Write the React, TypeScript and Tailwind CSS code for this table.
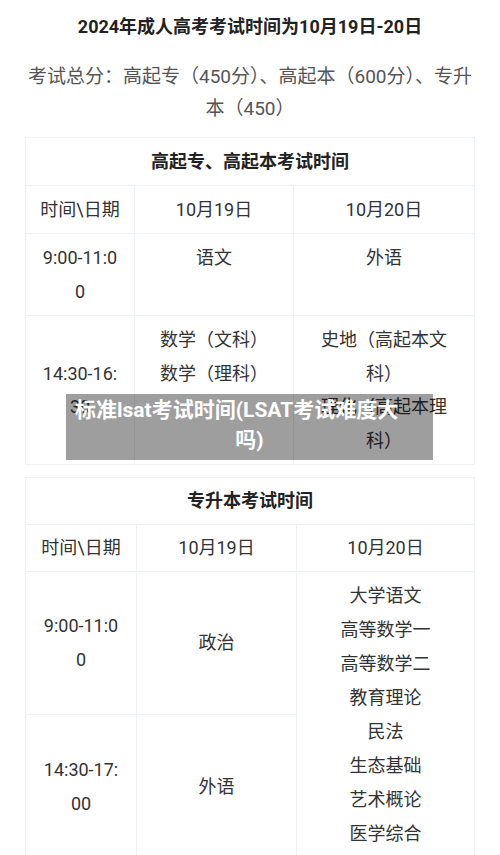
import { ReactElement, ReactNode } from "react";

const font = { fontFamily: 'Roboto, "Noto Sans CJK SC", sans-serif' };

const Cell = ({
  children,
  top = false,
  rowSpan,
  colSpan,
  className = "px-[13px]"
}: {
  children: ReactNode;
  top?: boolean;
  rowSpan?: number;
  colSpan?: number;
  className?: string;
}): ReactElement => (
  <td
    rowSpan={rowSpan}
    colSpan={colSpan}
    className={`border border-[#eef1f5] py-[7px] text-center break-all ${
      top ? "align-top" : "align-middle"
    } ${className}`}
  >
    {children}
  </td>
);

const Lines = ({ items }: { items: string[] }): ReactElement => (
  <>
    {items.map((t) => (
      <div key={t}>{t}</div>
    ))}
  </>
);

const App = (): ReactElement => {
  return (
    <div className="relative w-[500px] h-[855px] overflow-hidden bg-white" style={font}>
      <h1 className="pt-[11px] text-center text-[18px] font-bold leading-[32px] text-[#222]">
        2024年成人高考考试时间为10月19日-20日
      </h1>
      <p className="mt-[18px] px-[25px] text-center text-[19px] leading-[32px] text-[#555]">
        考试总分：高起专（450分）、高起本（600分）、专升本（450）
      </p>

      {/* 高起专、高起本 */}
      <table className="mx-[25px] mt-[12px] w-[449px] table-fixed border-collapse text-[18px] leading-[33.5px] text-[#333]">
        <colgroup>
          <col className="w-[109px]" />
          <col className="w-[159px]" />
          <col className="w-[181px]" />
        </colgroup>
        <tbody>
          <tr className="leading-[33px]">
            <Cell colSpan={3} className="px-[13px] font-bold text-[#222]">
              高起专、高起本考试时间
            </Cell>
          </tr>
          <tr className="leading-[33px]">
            <Cell>时间\日期</Cell>
            <Cell>10月19日</Cell>
            <Cell>10月20日</Cell>
          </tr>
          <tr>
            <Cell>9:00-11:00</Cell>
            <Cell top>语文</Cell>
            <Cell top>外语</Cell>
          </tr>
          <tr>
            <Cell>14:30-16:30</Cell>
            <Cell top>
              <Lines items={["数学（文科）", "数学（理科）"]} />
            </Cell>
            <Cell top className="px-[21px]">
              <div>史地（高起本文科）</div>
              <div>理化（高起本理科）</div>
            </Cell>
          </tr>
        </tbody>
      </table>

      {/* 专升本 */}
      <table className="mx-[25px] mt-[12px] w-[449px] table-fixed border-collapse text-[18px] leading-[34px] text-[#333]">
        <colgroup>
          <col className="w-[111px]" />
          <col className="w-[160px]" />
          <col className="w-[178px]" />
        </colgroup>
        <tbody>
          <tr className="leading-[32px]">
            <Cell colSpan={3} className="px-[13px] font-bold text-[#222]">
              专升本考试时间
            </Cell>
          </tr>
          <tr className="leading-[32px]">
            <Cell>时间\日期</Cell>
            <Cell>10月19日</Cell>
            <Cell>10月20日</Cell>
          </tr>
          <tr>
            <Cell className="h-[143px] px-[13px]">9:00-11:00</Cell>
            <Cell>政治</Cell>
            <Cell top rowSpan={2}>
              <Lines
                items={[
                  "大学语文",
                  "高等数学一",
                  "高等数学二",
                  "教育理论",
                  "民法",
                  "生态基础",
                  "艺术概论",
                  "医学综合"
                ]}
              />
            </Cell>
          </tr>
          <tr>
            <Cell>14:30-17:00</Cell>
            <Cell>外语</Cell>
          </tr>
        </tbody>
      </table>

      {/* caption over the picture */}
      <div className="absolute left-[66px] top-[394px] h-[66px] w-[367px] bg-[rgba(0,0,0,0.38)] px-[9px] pt-[1px] text-[21px] font-bold leading-[30px] text-white">
        <span className="block whitespace-nowrap">标准lsat考试时间(LSAT考试难度大</span>
        <span className="block text-center">吗)</span>
      </div>
    </div>
  );
};

export default App;
